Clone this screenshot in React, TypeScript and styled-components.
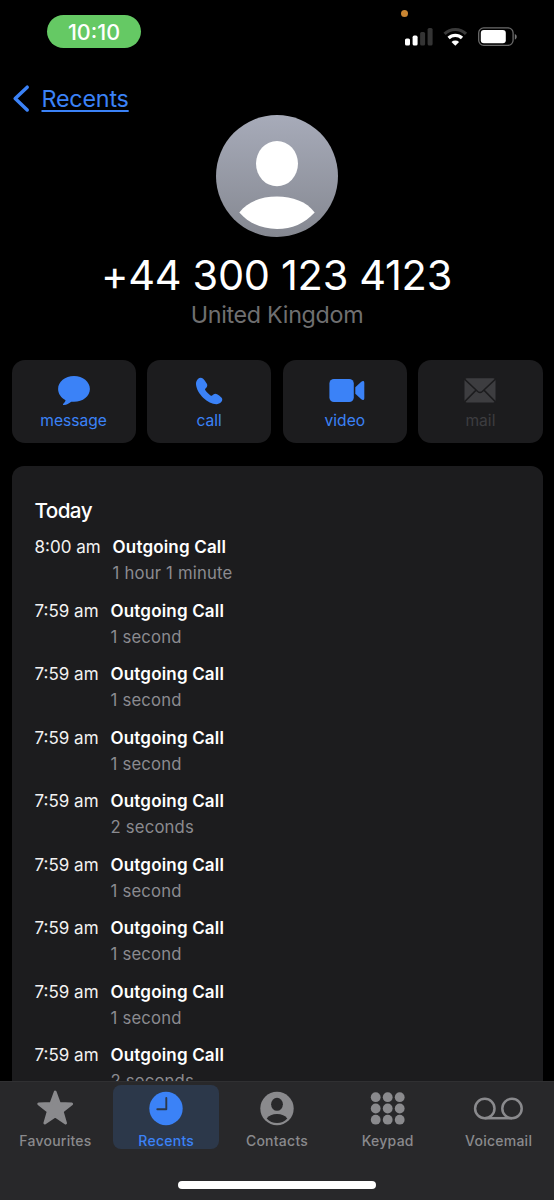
import React from 'react';
import styled, { createGlobalStyle } from 'styled-components';

const BLUE = '#3b82f7';
const GREY = '#8a8a8d';

const GlobalStyle = createGlobalStyle`
  *, *::before, *::after { box-sizing: border-box; }
  body {
    margin: 0;
    background: #000;
    font-family: Inter, "Liberation Sans", sans-serif;
    color: #fff;
  }
  button { font: inherit; color: inherit; border: 0; padding: 0; background: none; }
  svg { display: block; flex: none; overflow: visible; }
`;

const Screen = styled.div`
  width: 554px;
  height: 1200px;
  display: flex;
  flex-direction: column;
  background: #000;
  overflow: hidden;
`;

const StatusBar = styled.header`
  height: 83px;
  flex: none;
  display: flex;
  justify-content: space-between;
  align-items: flex-start;
  padding: 15px 37px 0 47px;
`;

const TimePill = styled.div`
  width: 94px;
  height: 33px;
  border-radius: 17px;
  background: #65c964;
  font-size: 21.5px;
  font-weight: 500;
  line-height: 34px;
  text-align: center;
`;

const StatusIcons = styled.div`
  position: relative;
  display: flex;
  gap: 11px;
  padding-top: 12px;
`;

const MicDot = styled.span`
  position: absolute;
  left: -3px;
  top: -5.5px;
  width: 7px;
  height: 7px;
  border-radius: 50%;
  background: #c98532;
`;

const NavBar = styled.nav`
  height: 32px;
  flex: none;
  display: flex;
  align-items: center;
  gap: 11.5px;
  padding-left: 13px;
`;

const BackLink = styled.a`
  color: ${BLUE};
  font-size: 23.3px;
  line-height: 32px;
  letter-spacing: -0.2px;
  text-decoration: underline;
  text-decoration-thickness: 1.5px;
  text-underline-offset: 3px;
`;

const Profile = styled.section`
  flex: none;
  display: flex;
  flex-direction: column;
  align-items: center;
`;

const PhoneNumber = styled.h1`
  margin: 12px 1px 0 0;
  font-size: 41.5px;
  font-weight: 400;
  line-height: 52px;
  letter-spacing: -0.3px;
  white-space: nowrap;
`;

const Region = styled.p`
  margin: 0 0 2px;
  font-size: 23.3px;
  line-height: 27px;
  letter-spacing: -0.3px;
  color: #6f6f70;
`;

const Actions = styled.div`
  flex: none;
  display: grid;
  grid-template-columns: repeat(4, 1fr);
  gap: 11.5px;
  margin: 30px 11.5px 0;
`;

const ActionButton = styled.button<{ $disabled?: boolean }>`
  height: 83px;
  border-radius: 13px;
  background: #1c1c1e;
  color: ${(p) => (p.$disabled ? '#3d3d40' : BLUE)};
  display: flex;
  flex-direction: column;
  align-items: center;
  padding-top: 15px;
`;

const ActionLabel = styled.span`
  margin-top: 4px;
  font-size: 15.6px;
  line-height: 22px;
`;

const CallLog = styled.section`
  flex: 1;
  min-height: 0;
  overflow: hidden;
  margin: 23px 11.5px 0;
  padding: 29.5px 23px 0;
  border-radius: 12px 12px 0 0;
  background: #1c1c1e;
`;

const Day = styled.h2`
  margin: 0 0 8.7px;
  font-size: 20.7px;
  font-weight: 500;
  line-height: 30px;
  letter-spacing: -0.6px;
`;

const CallRow = styled.div`
  display: flex;
  gap: 12px;
  height: 63.5px;
  font-size: 17px;
  line-height: 26px;
  white-space: nowrap;
`;

const CallTime = styled.span`
  color: #f2f2f2;
`;

const CallInfo = styled.div`
  display: flex;
  flex-direction: column;
`;

const CallKind = styled.span`
  font-weight: 600;
  letter-spacing: 0.17px;
`;

const CallDuration = styled.span`
  font-size: 16.7px;
  color: #8b8b90;
  letter-spacing: 0.18px;
`;

const TabBar = styled.footer`
  height: 119px;
  flex: none;
  display: flex;
  flex-direction: column;
  align-items: center;
  justify-content: space-between;
  background: #28282a;
  border-top: 1px solid #303032;
  padding: 3px 0 11px;
`;

const Tabs = styled.div`
  width: 100%;
  display: grid;
  grid-template-columns: repeat(5, 1fr);
  justify-items: center;
`;

const Tab = styled.button<{ $active?: boolean }>`
  width: 105.5px;
  height: 64px;
  border-radius: 8px;
  display: flex;
  flex-direction: column;
  align-items: center;
  padding-top: 5px;
  color: ${(p) => (p.$active ? BLUE : GREY)};
  background: ${(p) => (p.$active ? '#2c384a' : 'transparent')};
`;

const TabLabel = styled.span`
  margin-top: 5px;
  font-size: 14px;
  font-weight: 500;
  line-height: 20px;
  letter-spacing: 0.25px;
`;

const HomeIndicator = styled.div`
  width: 197.5px;
  height: 8px;
  border-radius: 4px;
  background: #fff;
`;

const SignalIcon = () => (
  <svg width="28" height="20" viewBox="0 0 28 20">
    <rect x="1" y="11.5" width="5" height="7" rx="1.6" fill="#fff" />
    <rect x="8.6" y="8.6" width="5" height="9.9" rx="1.6" fill="#fff" />
    <rect x="16.1" y="5" width="5" height="13.5" rx="1.6" fill="#343434" />
    <rect x="23.6" y="1" width="5" height="17.5" rx="1.6" fill="#343434" />
  </svg>
);

const WifiIcon = () => (
  <svg width="24" height="20" viewBox="0 0 24 20">
    <path d="M1.6 6.9a15.2 15.2 0 0 1 21.4 0" fill="none" stroke="#3a3a3a" strokeWidth="3.2" />
    <path d="M5.6 11a9.600 9.600 0 0 1 13.400 0" fill="none" stroke="#fff" strokeWidth="3.2" />
    <path d="M12.300 18.800 8.500 14.900a5.600 5.600 0 0 1 7.600 0z" fill="#fff" />
  </svg>
);

const BatteryIcon = () => (
  <svg width="39" height="20" viewBox="0 0 39 20">
    <rect x="0.7" y="0.9" width="34.4" height="17.4" rx="5" fill="none" stroke="#6b6b6b" strokeWidth="1.3" />
    <rect x="2.8" y="3" width="25" height="13.2" rx="3" fill="#fff" />
    <path d="M36.8 6.9v5.6c1.1-.4 1.9-1.5 1.9-2.8s-.8-2.4-1.9-2.8z" fill="#777" />
  </svg>
);

const ChevronIcon = () => (
  <svg width="17" height="28" viewBox="0 0 17 28">
    <path d="M14.2 2.2 2.2 13.5l12 11.5" fill="none" stroke={BLUE} strokeWidth="3.5" strokeLinecap="round" strokeLinejoin="round" />
  </svg>
);

const Avatar = () => (
  <svg width="122" height="122" viewBox="0 0 122 122">
    <defs>
      <linearGradient id="avatarFill" x1="0" y1="0" x2="0" y2="1">
        <stop offset="0" stopColor="#a7abb9" />
        <stop offset="1" stopColor="#858891" />
      </linearGradient>
    </defs>
    <circle cx="61" cy="61" r="61" fill="url(#avatarFill)" />
    <ellipse cx="61" cy="48.6" rx="21" ry="22.7" fill="#fff" />
    <path d="M23.3 97.5C32 86.5 45.5 81.5 61 81.5s29.5 5 37.7 16C88.5 108.5 76 114 61 114S33 108.5 23.3 97.5z" fill="#fff" />
  </svg>
);

const MessageIcon = () => (
  <svg width="32" height="31" viewBox="0 0 32 31" fill="currentColor">
    <path d="M16 1C7.1 1 .1 6.7.1 14c0 4.700 2.900 8.600 7.100 10.900.4.2.4.7.2 1.100-.5 1-1.300 1.900-2.100 2.700-.7.7-.3 1.500.7 1.400 2.600-.2 5-1.600 6.900-3.100.4-.3.7-.4 1.200-.3l1.900.1c8.900 0 15.900-5.600 15.900-12.800S24.900 1 16 1z" />
  </svg>
);

const PhoneIcon = () => (
  <svg width="27" height="31" viewBox="0 0 27 31" fill="currentColor">
    <path d="M6.900 3.500C5.300 2.400 3.300 2.600 1.900 4 .5 5.500-.1 7.200 0 9.200c.3 4.800 3.400 9.800 7.400 13.700 3.900 3.900 8.700 6.200 13 6.300 1.800 0 3.500-.7 4.800-2.100 1.300-1.400 1.500-3.100.2-4.500-1-1.100-2.700-2.300-4.300-3.300-1.300-.8-2.600-.7-3.700.2l-1.300 1.100c-.4.300-.7.3-1.200.1-1-.6-2.100-1.500-3.200-2.600s-1.900-2.100-2.500-3.200c-.3-.5-.2-.8.1-1.200l1.200-1.300c1-1.200 1-2.500.2-3.800C9.700 6.900 8.100 4.300 6.900 3.500z" />
  </svg>
);

const VideoIcon = () => (
  <svg width="36" height="31" viewBox="0 0 36 31" fill="currentColor">
    <rect x="2.4" y="3.9" width="24.4" height="23.2" rx="4.500" />
    <path d="M28.300 12.300 34.300 6.800c1.500-1.300 3-.9 3 1v15.400c0 1.900-1.500 2.300-3 1l-6-5.500z" />
  </svg>
);

const MailIcon = () => (
  <svg width="32" height="31" viewBox="0 0 32 31" fill="none">
    <rect x="0.5" y="3.3" width="31" height="24.2" rx="2.5" fill="currentColor" />
    <path d="M0 3.600 13.700 16.500q2.300 2 4.600 0L32 3.600M0 27.400l11.800-12M32 27.400l-11.800-12" stroke="#1c1c1e" strokeWidth="1.500" />
  </svg>
);

const StarIcon = () => (
  <svg width="37" height="36" viewBox="0 0 37 36" fill="currentColor" stroke="currentColor" strokeWidth="2.8" strokeLinejoin="round">
    <path d="M18.2 2 22.4 13.5 34.7 13.900 25.200 21.300 28.600 33.100 18.200 26.200 7.800 33.100 11.200 21.300 1.700 13.900 14 13.500z" />
  </svg>
);

const ClockIcon = () => (
  <svg width="34" height="36" viewBox="0 0 34 36" fill="none">
    <circle cx="17" cy="18.5" r="16.7" fill="currentColor" />
    <path d="M17.300 8v11.300H8.300" stroke="#2c384a" strokeWidth="1.900" strokeLinecap="round" strokeLinejoin="round" />
  </svg>
);

const ContactIcon = () => (
  <svg width="34" height="36" viewBox="0 0 34 36">
    <circle cx="17" cy="18.5" r="16.7" fill="currentColor" />
    <ellipse cx="17" cy="14.3" rx="5.9" ry="6.500" fill="#28282a" />
    <path d="M6.700 28.400c2-3 5.700-4.500 10.300-4.500s8.300 1.500 10.300 4.500C24.600 31.400 21 33 17 33S9.400 31.400 6.700 28.400z" fill="#28282a" />
  </svg>
);

const KeypadIcon = () => (
  <svg width="34" height="36" viewBox="0 0 34 36" fill="currentColor">
    {[7.2, 18.5, 29.7].map((cy) =>
      [4.7, 16.7, 28.7].map((cx) => <circle key={`${cx}-${cy}`} cx={cx} cy={cy} r="4.9" />),
    )}
  </svg>
);

const VoicemailIcon = () => (
  <svg width="50" height="36" viewBox="0 0 50 36" fill="none" stroke="currentColor" strokeWidth="2.5">
    <circle cx="10.8" cy="18.5" r="9.7" />
    <circle cx="38" cy="18.5" r="9.7" />
    <path d="M10.8 28.2H38" />
  </svg>
);

const actions = [
  { label: 'message', Icon: MessageIcon },
  { label: 'call', Icon: PhoneIcon },
  { label: 'video', Icon: VideoIcon },
  { label: 'mail', Icon: MailIcon, disabled: true },
];

const calls = [
  ['8:00 am', '1 hour 1 minute'],
  ['7:59 am', '1 second'],
  ['7:59 am', '1 second'],
  ['7:59 am', '1 second'],
  ['7:59 am', '2 seconds'],
  ['7:59 am', '1 second'],
  ['7:59 am', '1 second'],
  ['7:59 am', '1 second'],
  ['7:59 am', '2 seconds'],
];

const tabs = [
  { label: 'Favourites', Icon: StarIcon },
  { label: 'Recents', Icon: ClockIcon, active: true },
  { label: 'Contacts', Icon: ContactIcon },
  { label: 'Keypad', Icon: KeypadIcon },
  { label: 'Voicemail', Icon: VoicemailIcon },
];

export default function App() {
  return (
    <Screen>
      <GlobalStyle />
      <StatusBar>
        <TimePill>10:10</TimePill>
        <StatusIcons>
          <MicDot />
          <SignalIcon />
          <WifiIcon />
          <BatteryIcon />
        </StatusIcons>
      </StatusBar>
      <NavBar>
        <ChevronIcon />
        <BackLink>Recents</BackLink>
      </NavBar>
      <Profile>
        <Avatar />
        <PhoneNumber>+44 300 123 4123</PhoneNumber>
        <Region>United Kingdom</Region>
      </Profile>
      <Actions>
        {actions.map(({ label, Icon, disabled }) => (
          <ActionButton key={label} $disabled={disabled}>
            <Icon />
            <ActionLabel>{label}</ActionLabel>
          </ActionButton>
        ))}
      </Actions>
      <CallLog>
        <Day>Today</Day>
        {calls.map(([time, duration], i) => (
          <CallRow key={i}>
            <CallTime>{time}</CallTime>
            <CallInfo>
              <CallKind>Outgoing Call</CallKind>
              <CallDuration>{duration}</CallDuration>
            </CallInfo>
          </CallRow>
        ))}
      </CallLog>
      <TabBar>
        <Tabs>
          {tabs.map(({ label, Icon, active }) => (
            <Tab key={label} $active={active}>
              <Icon />
              <TabLabel>{label}</TabLabel>
            </Tab>
          ))}
        </Tabs>
        <HomeIndicator />
      </TabBar>
    </Screen>
  );
}
